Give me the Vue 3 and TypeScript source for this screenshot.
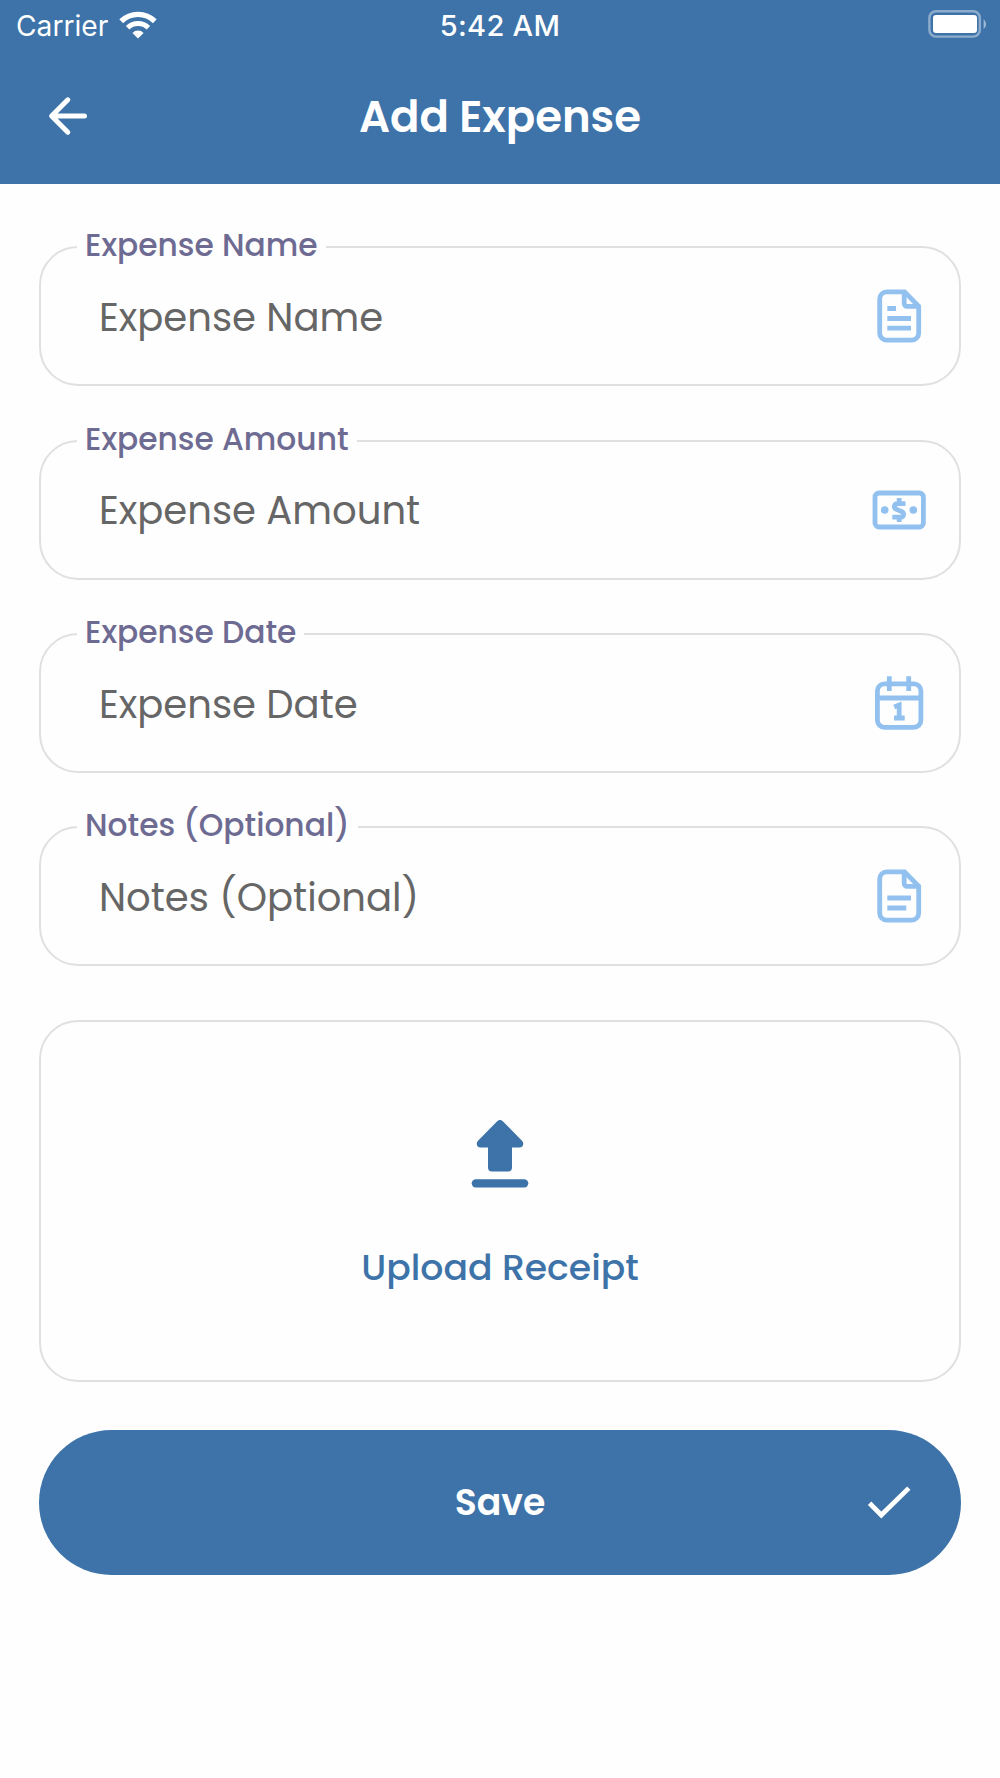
<script setup lang="ts">
interface Field {
  label: string
  icon: 'doc' | 'money' | 'calendar' | 'notes'
}

const fields: Field[] = [
  { label: 'Expense Name', icon: 'doc' },
  { label: 'Expense Amount', icon: 'money' },
  { label: 'Expense Date', icon: 'calendar' },
  { label: 'Notes (Optional)', icon: 'notes' },
]
</script>

<template>
  <div class="screen">
    <header class="header">
      <div class="status">
        <div class="carrier">
          <span>Carrier</span>
          <svg width="38" height="28" viewBox="0 0 38 28" fill="none" stroke="#fff">
            <path d="M2.2 10.2a24 24 0 0 1 33.6 0" stroke-width="5.4" />
            <path d="M8.6 16.8a15 15 0 0 1 20.8 0" stroke-width="5" />
            <path d="M19 27.5l-5.6-5.6a8 8 0 0 1 11.2 0z" fill="#fff" stroke="none" />
          </svg>
        </div>
        <div class="time">5:42 AM</div>
        <div class="power">
          <svg width="60" height="28" viewBox="0 0 60 28">
            <rect x="1.4" y="1.2" width="50.4" height="25.4" rx="6.6" fill="none" stroke="#fff" stroke-opacity=".42" stroke-width="2.4" />
            <rect x="5" y="5" width="44" height="18" rx="3" fill="#fff" />
            <path d="M55.6 9.2a6 6 0 0 1 0 9.8z" fill="#fff" fill-opacity=".5" />
          </svg>
        </div>
      </div>
      <div class="nav">
        <svg class="back" width="40" height="40" viewBox="0 0 40 40" fill="none" stroke="#fff" stroke-width="5" stroke-linecap="round" stroke-linejoin="round">
          <path d="M19.8 3.8L3.6 20l16.2 16.2M4 20h32.5" />
        </svg>
        <h1 class="title">Add Expense</h1>
      </div>
    </header>

    <main class="form">
      <div v-for="f in fields" :key="f.label" class="field">
        <label class="label">{{ f.label }}</label>
        <span class="placeholder">{{ f.label }}</span>
        <svg class="icon" width="60" height="60" viewBox="0 0 60 60">
          <template v-if="f.icon === 'doc' || f.icon === 'notes'">
            <path d="M35.6 5.8H17.7a7 7 0 0 0-7 7v34.4a7 7 0 0 0 7 7h25a7 7 0 0 0 7-7V20.2z" />
            <path d="M35.2 6v11.5a2.8 2.8 0 0 0 2.8 2.8h11.5" />
            <path v-if="f.icon === 'doc'" d="M18.3 22.5H27M18.3 32.5H42M18.3 42.2H42" />
            <path v-else d="M18.3 32H42M18.3 42H37.3" />
          </template>
          <template v-else-if="f.icon === 'money'">
            <rect x="6" y="13" width="48.4" height="34" rx="4" />
            <circle class="solid" cx="15.7" cy="30" r="3.8" />
            <circle class="solid" cx="44.3" cy="30" r="3.8" />
            <path d="M36.5 23.6h-8.3a3 3 0 0 0-1.6 5.4l7 3a3 3 0 0 1-1.4 5.2h-8.9M30.2 18v5M30.2 37v5" />
          </template>
          <template v-else>
            <rect x="8.4" y="10.8" width="43.5" height="43.5" rx="7" />
            <path d="M8.4 25h43.5M20.3 3.3V18M39.7 3.3V18" />
            <path d="M25.2 34l5-2V45M25 45h10.7" />
          </template>
        </svg>
      </div>

      <div class="upload">
        <svg width="58" height="68" viewBox="0 0 58 68" fill="#3d73a9">
          <path d="M26.2 1.3a4 4 0 0 1 5.6 0L51 20.7c2.6 2.7 1 6.8-2.6 6.8H41v20a4 4 0 0 1-4 4H21a4 4 0 0 1-4-4v-20H9.6c-3.6 0-5.2-4.1-2.6-6.8z" />
          <rect x=".7" y="59.2" width="56.6" height="8.3" rx="4.15" />
        </svg>
        <span class="upload-text">Upload Receipt</span>
      </div>

      <button class="save" type="button">
        <span>Save</span>
        <svg width="46" height="34" viewBox="0 0 46 34" fill="none" stroke="#fff" stroke-width="4.8">
          <path d="M2.6 18.3l11.7 11.7L41.8 3.1" />
        </svg>
      </button>
    </main>
  </div>
</template>

<style>
body {
  background: #fefefe;
}
</style>

<style scoped>
.screen {
  width: 1000px;
  height: 1778px;
  overflow: hidden;
  font-family: Poppins, Inter, sans-serif;
  background: #fefefe;
}
.header {
  height: 183.5px;
  background: #3d73a9;
  color: #fff;
}
.status {
  display: grid;
  grid-template-columns: 1fr auto 1fr;
  align-items: center;
  height: 50px;
  padding: 0 12px;
  font-family: Inter, sans-serif;
  font-size: 29px;
}
.carrier {
  display: flex;
  align-items: center;
  gap: 11px;
  padding: 1px 0 0 4px;
  font-size: 28.2px;
}
.carrier svg,
.power svg {
  margin-bottom: 2px;
}
.time {
  font-weight: 500;
  letter-spacing: 0.3px;
}
.power {
  display: flex;
  justify-content: flex-end;
}
.nav {
  display: grid;
  grid-template-columns: 40px 1fr 40px;
  align-items: center;
  height: 134px;
  padding: 0 48px;
}
.back {
  margin-bottom: 2px;
}
.title {
  margin: 0 0 2px;
  text-align: center;
  font-size: 43.4px;
  font-weight: 600;
}
.form {
  padding: 62.9px 39px 0;
}
.field {
  position: relative;
  display: flex;
  align-items: center;
  justify-content: space-between;
  box-sizing: border-box;
  height: 140px;
  margin-bottom: 53.3px;
  padding: 0 30px 0 58px;
  border: 2.5px solid #e0e0e0;
  border-radius: 39px;
}
.label {
  position: absolute;
  top: -25px;
  left: 36px;
  padding: 0 8px;
  background: #fefefe;
  font-size: 31.3px;
  font-weight: 500;
  line-height: 44px;
  color: #6e6b93;
}
.placeholder {
  padding-top: 2.6px;
  font-size: 38.6px;
  color: #666;
}
.icon {
  fill: none;
  stroke: #92c1f0;
  stroke-width: 4.8;
}
.icon .solid {
  fill: #92c1f0;
  stroke: none;
}
.upload {
  display: flex;
  flex-direction: column;
  align-items: center;
  box-sizing: border-box;
  height: 362px;
  margin-bottom: 48.4px;
  padding-top: 98px;
  border: 2.5px solid #e0e0e0;
  border-radius: 39px;
}
.upload-text {
  margin-top: 55px;
  font-size: 36.2px;
  font-weight: 500;
  line-height: 50px;
  color: #3d73a9;
}
.save {
  display: grid;
  grid-template-columns: 46px 1fr 46px;
  align-items: center;
  width: 100%;
  height: 145px;
  padding: 0 48px;
  border: 0;
  border-radius: 73px;
  background: #3d73a9;
  color: #fff;
  font-family: inherit;
  font-size: 36.2px;
  font-weight: 600;
}
.save span {
  grid-column: 2;
}
</style>
